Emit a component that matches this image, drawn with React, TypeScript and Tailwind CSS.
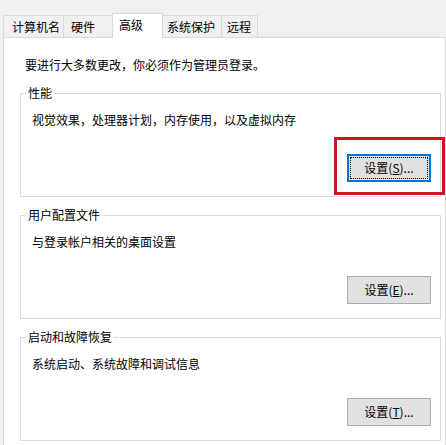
import React from "react";

const FONT = { fontFamily: '"Noto Sans CJK SC", "Noto Sans", sans-serif' };

type Tab = { label: string; w: string; pl: string; first?: boolean; active?: boolean };

const tabs: Tab[] = [
  { label: "计算机名", w: "w-[61px]", pl: "pl-[8px]", first: true },
  { label: "硬件", w: "w-[48px]", pl: "pl-[7px]" },
  { label: "高级", w: "w-[51px]", pl: "pl-[6px]", active: true },
  { label: "系统保护", w: "w-[59px]", pl: "pl-[4px]" },
  { label: "远程", w: "w-[36px]", pl: "pl-[5px]" },
];

function TabItem({ tab }: { tab: Tab }) {
  if (tab.active) {
    return (
      <div
        className={`relative z-10 -mb-px h-[25px] ${tab.w} ${tab.pl} shrink-0 border-x border-t border-[#d9d9d9] bg-white pt-[3px] leading-[16px]`}
      >
        {tab.label}
      </div>
    );
  }
  return (
    <div
      className={`h-[22px] ${tab.w} ${tab.pl} shrink-0 border-t border-[#d9d9d9] bg-[#f0f0f0] leading-[21px] ${
        tab.first ? "border-x" : tab.label === "硬件" ? "" : "border-r"
      }`}
    >
      {tab.label}
    </div>
  );
}

function SettingsButton({ letter, focused }: { letter: string; focused?: boolean }) {
  if (focused) {
    return (
      <div className="relative">
        <button className="relative flex h-[28px] w-[84px] items-center justify-center border-2 border-[#0078d7] bg-[#e1e1e1] text-[12px] leading-[16px] text-black">
          <span className="absolute inset-[1px] border border-dotted border-black" />
          设置(<span className="underline">{letter}</span>)...
        </button>
        {/* red highlight frame */}
        <div className="pointer-events-none absolute -top-[17px] -right-[14px] -bottom-[13px] -left-[13px] border-[3px] border-[#cc1424]" />
      </div>
    );
  }
  return (
    <button className="flex h-[28px] w-[84px] items-center justify-center border border-[#adadad] bg-[#e1e1e1] text-[12px] leading-[16px] text-black">
      设置(<span className="underline">{letter}</span>)...
    </button>
  );
}

function Group({
  title,
  desc,
  letter,
  focused,
  className = "",
}: {
  title: string;
  desc: string;
  letter: string;
  focused?: boolean;
  className?: string;
}) {
  return (
    <div className={`relative ml-[16px] w-[421px] border border-[#dcdcdc] pt-[18px] pb-[14px] ${className}`}>
      <span className="absolute -top-[9px] left-[5px] bg-white px-[2px] leading-[16px]">{title}</span>
      <div className="pl-[11px] leading-[16px]">{desc}</div>
      <div className="mt-[26px] flex justify-end pr-[9px]">
        <SettingsButton letter={letter} focused={focused} />
      </div>
    </div>
  );
}

export default function App() {
  return (
    <div
      className="h-[445px] w-[446px] overflow-hidden bg-[#f0f0f0] pt-[13px] pl-[3px] text-[12px] text-black"
      style={FONT}
    >
      {/* Tabs */}
      <div className="flex h-[24px] items-end">
        {tabs.map((t) => (
          <TabItem key={t.label} tab={t} />
        ))}
      </div>

      {/* Panel */}
      <div className="h-[420px] w-[443px] border-x border-t border-[#d9d9d9] bg-white">
        <div className="mt-[19px] mb-[20px] pl-[21px] leading-[16px]">要进行大多数更改，你必须作为管理员登录。</div>
        <Group title="性能" desc="视觉效果，处理器计划，内存使用，以及虚拟内存" letter="S" focused />
        <Group title="用户配置文件" desc="与登录帐户相关的桌面设置" letter="E" className="mt-[18px]" />
        <Group title="启动和故障恢复" desc="系统启动、系统故障和调试信息" letter="T" className="mt-[18px]" />
      </div>
    </div>
  );
}
